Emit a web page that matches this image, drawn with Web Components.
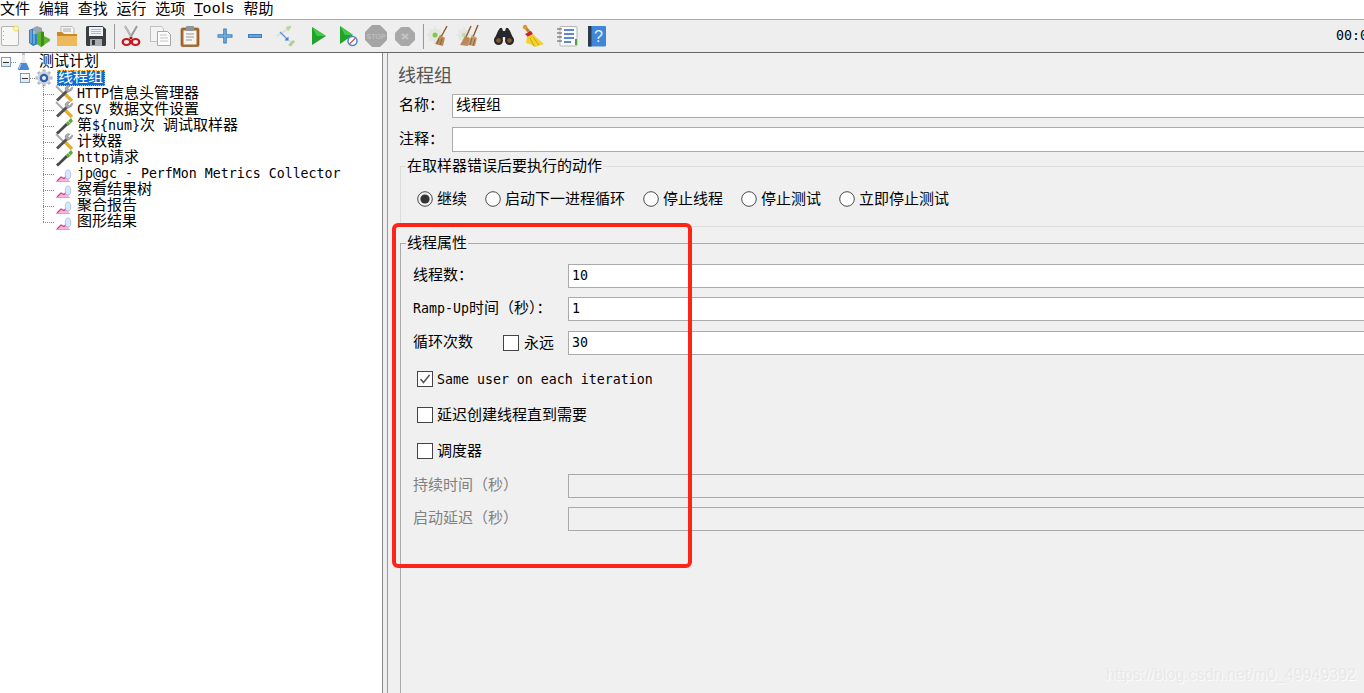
<!DOCTYPE html>
<html>
<head>
<meta charset="utf-8">
<title>JMeter</title>
<style>
    html, body { margin: 0; height: 100%; overflow: hidden; background: #f0f0f0; }
</style>
</head>
<body>
<jm-app></jm-app>
<script>
// Icons are all drawn by hand, 22x22 for the toolbar and 18x18 for the tree
const ICONS = {
    new: `<rect x="2.5" y="1.5" width="17" height="19" rx="1.5" fill="#f7f7f3" stroke="#b4b4b4"/><circle cx="17" cy="3.5" r="2.6" fill="#fdf7b0" stroke="#ecdc6a"/><path d="M4.5 6v1M4.5 10v1M4.5 14v1" stroke="#aaa"/>`,
    templates: `<path d="M1 5l5-2 4 2v14l-5 2-4-3z" fill="#2f7fc4"/><path d="M5 3l4-2 5 2v6H5z" fill="#9aa6ad"/><path d="M9 8l5-2 2 1v4l6 3v2l-9 6-4-3z" fill="#5fb52e"/><path d="M13 7h3v13l-3 2z" fill="#3c8c1c"/><path d="M3 5v13M6 6v13" stroke="#bcdcf0" stroke-width=".8"/>`,
    open: `<path d="M5 9V1.500h11l2 2V10z" fill="#f4f4f0" stroke="#aaa" stroke-width=".8"/><path d="M7 4h8M7 6h8" stroke="#999" stroke-width=".8"/><path d="M1 7h5l2 2h13v10.500a1.500 1.500 0 0 1-1.500 1.500h-17A1.500 1.500 0 0 1 1 19.500z" fill="#c98a22"/><path d="M1 11h20v8.500a1.500 1.500 0 0 1-1.500 1.500h-17A1.500 1.500 0 0 1 1 19.500z" fill="#edb95c"/>`,
    save: `<path d="M1 2.500A1.500 1.500 0 0 1 2.500 1h15L21 4v15.500a1.500 1.500 0 0 1-1.500 1.500h-17A1.500 1.500 0 0 1 1 19.500z" fill="#3a3d42"/><rect x="4" y="2" width="14" height="9" fill="#eef2f6"/><path d="M6 4.500h10M6 6.500h10M6 8.500h10" stroke="#8fb0cf" stroke-width=".8"/><rect x="5" y="14" width="12" height="7" fill="#a9adb1"/><rect x="7" y="15" width="3" height="5" fill="#33363a"/>`,
    cut: `<path d="M5 1l7.500 13M17 1L9.500 14" stroke="#9a9a9a" stroke-width="2"/><path d="M5 1l7.500 13" stroke="#ddd" stroke-width=".7"/><ellipse cx="6.500" cy="17" rx="3.800" ry="3" fill="none" stroke="#c8171c" stroke-width="2.200"/><ellipse cx="15.500" cy="17" rx="3.800" ry="3" fill="none" stroke="#c8171c" stroke-width="2.200"/><circle cx="11" cy="13" r="1.200" fill="#b01015"/>`,
    copy: `<path d="M.5 1.500h11l2 2v13H.5z" fill="#f3f3f3" stroke="#c0c0c0"/><path d="M7.500 6.500h10l3 3v11h-13z" fill="#fbfbfb" stroke="#a8a8a8"/><path d="M10 10h7M10 13h8M10 16h8" stroke="#c4c4c4"/>`,
    paste: `<rect x="2" y="3" width="18" height="18.500" rx="1.500" fill="#a9692b" stroke="#7e4c1c" stroke-width=".6"/><rect x="4.500" y="5.500" width="13" height="14" fill="#f5f5f1"/><rect x="7" y="1" width="8" height="5" rx="1" fill="#8f9498"/><path d="M7 9h8M7 12h8M7 15h6" stroke="#999"/>`,
    plus: `<path d="M11 3.500v15M3.500 11h15" stroke="#3f7fbd" stroke-width="3.600"/><path d="M11 4.500v13M4.500 11h13" stroke="#7fb1de" stroke-width="1.400"/>`,
    minus: `<path d="M4 11h14" stroke="#3f7fbd" stroke-width="4"/><path d="M5 11h12" stroke="#86b6e1" stroke-width="1.300"/>`,
    toggle: `<path d="M13 2l4-1.500 1.500 1.500-3 4-2-1z" fill="#b9d8a4"/><path d="M13 5L4 11" stroke="#e0e0dc" stroke-width="2.400"/><path d="M12 14l7 3" stroke="#d8dadc" stroke-width="1.500"/><path d="M15 20l5-5 2 1.500-4 5z" fill="#a8d290"/><path d="M7 7l7 7" stroke="#5a94d8" stroke-width="1.200"/><path d="M15.500 15.500l-4 0 4-4z" fill="#3f80d8"/>`,
    run: `<path d="M4 2l14 9-14 9z" fill="#1fa32a"/><path d="M4 2l14 9-9 0z" fill="#43c74a"/>`,
    runno: `<path d="M3 1l13 9-13 9z" fill="#1fa32a"/><path d="M3 1l13 9-8 0z" fill="#43c74a"/><circle cx="15.500" cy="16" r="4.500" fill="#fff" stroke="#4a86cf" stroke-width="1.500"/><path d="M18.500 13l-6 6" stroke="#e05050" stroke-width="1.300"/>`,
    stop: `<path d="M7 0h8l7 7v8l-7 7H7l-7-7V7z" fill="#a4a4a4"/><text x="11" y="13.500" text-anchor="middle" font-family="Liberation Sans" font-weight="700" font-size="7" fill="#bcbcbc">STOP</text>`,
    shutdown: `<path d="M7 2h8l6 6v7l-6 6H7l-6-6V8z" fill="#a8a8a8"/><path d="M8 9l6 5M14 9l-6 5" stroke="#c4c4c4" stroke-width="2.200"/>`,
    clear: `<circle cx="8" cy="10" r="6.500" fill="#e6e6e0"/><path d="M8 1v18M0 10h16M2 4l12 12M14 4L2 16" stroke="#e6e6e0" stroke-width="2.400"/><circle cx="8" cy="10" r="2.500" fill="#7ec850"/><path d="M20 1l-6 11" stroke="#8a5a2a" stroke-width="1.400"/><path d="M13 10l5 3-2 8-8-2z" fill="#b98a58"/><path d="M12 13l-2 6M15 14l-2 6" stroke="#8a6236"/>`,
    clearall: `<circle cx="7" cy="10" r="6" fill="#e6e6e0"/><path d="M7 2v16M0 10h14M2 5l10 10M12 5L2 15" stroke="#e6e6e0" stroke-width="2.200"/><circle cx="7" cy="10" r="2.300" fill="#c4dcb0"/><path d="M14 1l-5 11M21 0l-5 12" stroke="#8a5a2a" stroke-width="1.400"/><path d="M8 11l5 2-2 8-8-1z" fill="#b98a58"/><path d="M15 10l5 3-2 8-8-1z" fill="#c69a6a"/><path d="M15 13l-2 7M18 14l-2 7" stroke="#8a6236"/>`,
    find: `<path d="M5 6l2-3h2l1 3h2l1-3h2l2 3 4 9-5 3-3-3-1-3h-2l-1 3-3 3-5-3z" fill="#26282b"/><circle cx="5.500" cy="15.500" r="4.500" fill="#26282b"/><circle cx="16.500" cy="15.500" r="4.500" fill="#26282b"/><circle cx="5.500" cy="15.500" r="2.300" fill="#8a5a2a"/><circle cx="16.500" cy="15.500" r="2.300" fill="#8a5a2a"/>`,
    broom: `<path d="M3 2l5 6" stroke="#c8862a" stroke-width="3"/><circle cx="3" cy="2" r="2.200" fill="#d99a3a"/><path d="M3 9l6-3 2 3-5 3z" fill="#d2202a"/><path d="M5 12l6-3 4 4 7 6-9 3-5-3-4-1z" fill="#f2d22c"/><path d="M8 13l4 8M11 12l6 8" stroke="#c9a61a"/>`,
    list: `<rect x="4" y="1.500" width="17" height="19.500" rx="1" fill="#fafafa" stroke="#b5b5b5"/><path d="M8 5h10M8 9h10M8 13h10M8 17h7" stroke="#2a62c8" stroke-width="1.400"/><path d="M1 4h5M1 8h5M1 12h5M1 16h5" stroke="#555" stroke-width="1.200"/><rect x="19" y="14" width="2" height="6" fill="#4ea33a"/>`,
    help: `<rect x="2" y="1" width="18" height="20.500" rx="1" fill="#3f86d8"/><rect x="2" y="1" width="3.500" height="20.500" fill="#2b3a4c"/><text x="12.500" y="17" text-anchor="middle" font-family="Liberation Sans" font-size="16" fill="#e6f0fb">?</text>`,
    flask: `<path d="M6 1h3v6l4 8a1.500 1.500 0 0 1-1.300 2H3.300A1.500 1.500 0 0 1 2 15l4-8z" fill="#e6e8ec"/><path d="M4.500 10h6l2.500 5.500a1 1 0 0 1-1 1.500H3a1 1 0 0 1-1-1.500z" fill="#4a88d4"/><path d="M5 11l-2 5" stroke="#b8d4f2"/><path d="M6 1h3" stroke="#8a93a0"/>`,
    gear: `<path d="M9 0.500v17M.5 9h17M3 3l12 12M15 3L3 15" stroke="#b4b8be" stroke-width="3"/><circle cx="9" cy="9" r="6.500" fill="#d0d3d8"/><circle cx="9" cy="9" r="4.300" fill="#2f62b0"/><circle cx="9" cy="9" r="2" fill="#e8eef8"/>`,
    config: `<path d="M1 1l9 9" stroke="#a8a8a8" stroke-width="1.800"/><path d="M10 9l7 7" stroke="#e8b020" stroke-width="3.400"/><path d="M13 5L2 15.500" stroke="#505356" stroke-width="3"/><path d="M17 2l-2.500 2.500-2-1L15 1l-2.500-.5-2.500 2.500 .5 3 3 1 3-1.500 1.500-3z" fill="#a8a8a8" stroke="#888" stroke-width=".5"/>`,
    sampler: `<path d="M12 7L2 16.500" stroke="#44474a" stroke-width="3"/><path d="M8 9l-5 5" stroke="#a4a4a4" stroke-width=".8"/><path d="M11 6l5-5 2 3-5 5z" fill="#63a63f"/><path d="M13 4l3 3" stroke="#a8d88c"/>`,
    chart: `<path d="M2 16l4-4 3 1.500 4-3.500 1 6z" fill="#f7b6dd"/><path d="M2 16l4-4 3 1.500 4-3.500" fill="none" stroke="#d9338f" stroke-width="1.100"/><path d="M1 16.500h14" stroke="#e0a0c8"/><ellipse cx="13" cy="9.500" rx="2.700" ry="4.500" fill="#dbe7fb" stroke="#9db8e6" stroke-width=".8"/>`
};

// ASCII runs are in the mono font, the rest in the CJK one
const mixText = (str) => str.replace(/[\x20-\x7e]+/g, (run) => `<span class="m">${run}</span>`);

const BASE_TEXT = `
    :host { font: 15px "Noto Sans CJK SC", sans-serif; color: #000; }
    .m { font: 13.28px/1 "DejaVu Sans Mono", monospace; white-space: pre; }
`;

class JmIcon extends HTMLElement {
    connectedCallback() {
        const size = parseInt(this.getAttribute('size') || '22');
        this.attachShadow({ mode: 'open' }).innerHTML = `
            <style>:host { display: block; width: ${size}px; height: ${size}px; flex: none; } svg { display: block; overflow: visible; }</style>
            <svg width="${size}" height="${size}" viewBox="0 0 ${size} ${size}">${ICONS[this.getAttribute('name')]}</svg>`;
    }
}

class JmMenubar extends HTMLElement {
    connectedCallback() {
        this.attachShadow({ mode: 'open' }).innerHTML = `
            <style>
                :host { display: flex; gap: 8.8px; height: 19px; background: #fff; border-bottom: 1px solid #aaa;
                    font: 15px/15px "Noto Sans CJK SC", sans-serif; color: #000; }
                .m { font: 15px/15px "Liberation Sans", sans-serif; letter-spacing: 1.100px; }
                u { text-underline-offset: 2px; }
            </style>
            <span>文件</span><span>编辑</span><span>查找</span><span>运行</span><span>选项</span>
            <span class="m"><u>T</u>ools</span><span>帮助</span>`;
    }
}

class JmToolGroup extends HTMLElement {
    connectedCallback() {
        const root = this.attachShadow({ mode: 'open' });
        const icons = this.getAttribute('icons').split(' ').map((n) => `<jm-icon name="${n}"></jm-icon>`).join('');
        const tail = this.getAttribute('tail');
        root.innerHTML = `
            <style>
                :host { display: flex; align-items: center; gap: var(--gap, 7px); height: 32px; }
                i { width: 1px; height: 25px; background: #999; margin-left: auto; margin-right: ${tail}px; }
            </style>
            ${icons}${tail ? '<i></i>' : ''}`;
    }
}

class JmToolbar extends HTMLElement {
    connectedCallback() {
        this.attachShadow({ mode: 'open' }).innerHTML = `
            <style>
                ${BASE_TEXT}
                :host { display: grid; grid-template-columns: 120px 94px 94px 119px 66px 63px 1fr 28px; height: 32px;
                    background: #eee; border-bottom: 1px solid #666; overflow: hidden; }
                .first { margin-left: -1px; }
                .time { line-height: 32px; white-space: nowrap; overflow: hidden; }
            </style>
            <jm-tool-group class="first" icons="new templates open save" tail="5" style="--gap:6.7px"></jm-tool-group>
            <jm-tool-group icons="cut copy paste" tail="6" style="--gap:7.500px"></jm-tool-group>
            <jm-tool-group icons="plus minus toggle" tail="7" style="--gap:7.500px"></jm-tool-group>
            <jm-tool-group icons="run runno stop shutdown" tail="4" style="--gap:6.700px"></jm-tool-group>
            <jm-tool-group icons="clear clearall" tail="6" style="--gap:8px"></jm-tool-group>
            <jm-tool-group icons="find broom" tail="5" style="--gap:7px"></jm-tool-group>
            <jm-tool-group icons="list help" style="--gap:8px"></jm-tool-group>
            <span class="time m">00:00:00</span>`;
    }
}

class JmTreeNode extends HTMLElement {
    connectedCallback() {
        const level = parseInt(this.getAttribute('level') || '0');
        const selected = this.hasAttribute('selected');
        // level 0 and 1 have an expander box, level 2 only a dotted branch
        const lead = level === 2
            ? '<span class="indent2"></span><span class="branch"></span>'
            : `<span style="width:${level * 19}px"></span><span class="box"></span><span class="stub"></span>`;
        this.attachShadow({ mode: 'open' }).innerHTML = `
            <style>
                ${BASE_TEXT}
                :host { display: flex; align-items: center; height: 16px; line-height: 16px; white-space: nowrap; }
                .box { box-sizing: border-box; width: 10px; height: 10px; margin: 2px 0 0 1px; border: 1px solid #7f9db9; background: linear-gradient(#fff, #dfe6ee); display: flex; align-items: center; justify-content: center; flex: none; }
                .box::after { content: ''; width: 6px; height: 1px; background: #333; }
                .stub { width: 5px; height: 1px; margin-top: 2px; background-image: linear-gradient(90deg, #888 50%, transparent 50%); background-size: 2px 1px; }
                .indent2 { width: 43px; }
                .branch { width: 12px; height: 1px; margin-top: 2px; background-image: linear-gradient(90deg, #888 50%, transparent 50%); background-size: 2px 1px; }
                jm-icon { margin-top: 2px; }
                .label { margin-left: ${level === 0 ? 5 : 4}px; margin-bottom: 2px; }
                .sel { background: #0a6ccd; color: #fff; outline: 1px dotted #f2b04a; outline-offset: -1px; height: 16px; line-height: 12px; margin: 2px 0 0 4px; padding: 0 2px 0 1px; }
            </style>
            ${lead}
            <jm-icon name="${this.getAttribute('icon')}" size="18"></jm-icon>
            <span class="${selected ? 'sel' : 'label'}">${mixText(this.getAttribute('label'))}</span>`;
    }
}

class JmTree extends HTMLElement {
    connectedCallback() {
        this.attachShadow({ mode: 'open' }).innerHTML = `
            <style>
                :host { display: block; position: relative; width: 382px; flex: none; background: #fff; border-right: 1px solid #888; }
                .trunk { position: absolute; left: 43px; top: 32px; width: 1px; height: 138px;
                    background-image: linear-gradient(#888 50%, transparent 50%); background-size: 1px 2px; }
            </style>
            <div class="trunk"></div>
            <slot></slot>`;
    }
}

class JmField extends HTMLElement {
    connectedCallback() {
        const value = this.getAttribute('value') || '';
        const h = parseInt(this.getAttribute('h') || '24');
        const off = this.hasAttribute('disabled');
        this.attachShadow({ mode: 'open' }).innerHTML = `
            <style>
                ${BASE_TEXT}
                :host { display: block; flex: 1; min-width: 0; box-sizing: border-box; height: ${h}px; line-height: ${h - 6}px;
                    background: ${off ? 'transparent' : '#fff'}; border: 1px solid #aaa; border-right: 0; padding-left: 3px; white-space: nowrap; }
            </style>${mixText(value)}`;
    }
}

class JmRow extends HTMLElement {
    connectedCallback() {
        const label = this.getAttribute('label');
        const off = this.hasAttribute('disabled');
        const w = this.getAttribute('label-width');
        this.attachShadow({ mode: 'open' }).innerHTML = `
            <style>
                ${BASE_TEXT}
                :host { display: flex; align-items: center; white-space: nowrap; color: ${off ? '#808080' : '#000'}; }
                .l { width: ${w}px; flex: none; display: flex; align-items: center; }
                .t { flex: 1; line-height: 18px; margin-bottom: 4px; }
            </style>
            <span class="l"><span class="t">${mixText(label)}</span><slot name="extra"></slot></span>
            <slot></slot>`;
    }
}

class JmRadio extends HTMLElement {
    connectedCallback() {
        const on = this.hasAttribute('checked');
        this.attachShadow({ mode: 'open' }).innerHTML = `
            <style>
                ${BASE_TEXT}
                :host { display: flex; align-items: center; gap: 4px; height: 20px; white-space: nowrap; }
                svg { display: block; flex: none; }
                span { margin-bottom: 4px; }
            </style>
            <svg width="16" height="16" viewBox="0 0 16 16"><circle cx="8" cy="8" r="7.300" fill="${on ? '#f0f0f0' : '#fff'}" stroke="#4a4a4a"/>${on ? '<circle cx="8" cy="8" r="4.600" fill="#333"/>' : ''}</svg>
            <span><slot></slot></span>`;
    }
}

class JmCheck extends HTMLElement {
    connectedCallback() {
        const on = this.hasAttribute('checked');
        const label = this.getAttribute('label');
        this.attachShadow({ mode: 'open' }).innerHTML = `
            <style>
                ${BASE_TEXT}
                :host { display: flex; align-items: center; gap: ${this.getAttribute('gap') || 4}px; height: 20px; white-space: nowrap; }
                svg { display: block; flex: none; }
                span { margin-bottom: 4px; }
            </style>
            <svg width="16" height="16" viewBox="0 0 16 16"><rect x=".5" y=".5" width="15" height="15" fill="#fff" stroke="#444"/>${on ? '<path d="M3.500 8l3 3.500 6-7.500" fill="none" stroke="#555" stroke-width="1.500"/>' : ''}</svg>
            <span>${mixText(label)}</span>`;
    }
}

class JmTitledBox extends HTMLElement {
    connectedCallback() {
        const color = this.getAttribute('line');
        this.attachShadow({ mode: 'open' }).innerHTML = `
            <style>
                ${BASE_TEXT}
                :host { display: block; }
                fieldset { margin: 0; height: 100%; box-sizing: border-box; border: 1px solid ${color}; border-right: 0; padding: 0; min-width: 0; }
                legend { margin-left: 5px; padding: 0 1px 2px; line-height: 18px; }
            </style>
            <fieldset><legend>${this.getAttribute('title')}</legend><slot></slot></fieldset>`;
    }
}

class JmThreadGroup extends HTMLElement {
    connectedCallback() {
        this.attachShadow({ mode: 'open' }).innerHTML = `
            <style>
                ${BASE_TEXT}
                :host { display: flex; flex-direction: column; position: relative; flex: 1; min-width: 0; overflow: hidden;
                    background: #f0f0f0; border-left: 1px solid #999; padding-left: 11px; }
                h1 { margin: 10px 0 7px -1px; font: 18px/22px "Noto Sans CJK SC", sans-serif; color: #555; height: 24px; }
                .box1 { margin: 4px 0 0 1px; }
                .box2 { margin: 6px 0 -4px 1px; flex: 1; }
                .radios { display: flex; gap: 18px; padding: 13px 0 17px 16px; }
                .props { display: flex; flex-direction: column; padding: 11px 0 0 12px; }
                .mt33 { margin-top: 9px; } .mt34 { margin-top: 10px; }
                .c1 { margin: 14px 0 0 4px; } .c2 { margin: 16px 0 0 4px; }
                .d1 { margin-top: 13px; }
                .mark { position: absolute; left: 4px; top: 170px; box-sizing: border-box; width: 300px; height: 345px;
                    border: 4.500px solid #ff2418; border-radius: 6px; pointer-events: none; }
                .wm { position: absolute; right: 8px; bottom: 8px; font: 16px/20px "Liberation Sans", sans-serif;
                    color: #e8e8e8; text-shadow: 1px 1px 0 #fbfbfb; white-space: nowrap; }
            </style>
            <h1>线程组</h1>
            <jm-row label="名称：" label-width="53"><jm-field value="线程组"></jm-field></jm-row>
            <jm-row class="mt33" label="注释：" label-width="53"><jm-field h="25"></jm-field></jm-row>
            <jm-titled-box class="box1" title="在取样器错误后要执行的动作" line="#ddd">
                <div class="radios">
                    <jm-radio checked>继续</jm-radio>
                    <jm-radio>启动下一进程循环</jm-radio>
                    <jm-radio>停止线程</jm-radio>
                    <jm-radio>停止测试</jm-radio>
                    <jm-radio>立即停止测试</jm-radio>
                </div>
            </jm-titled-box>
            <jm-titled-box class="box2" title="线程属性" line="#aaa">
                <div class="props">
                    <jm-row label="线程数：" label-width="155"><jm-field value="10"></jm-field></jm-row>
                    <jm-row class="mt33" label="Ramp-Up时间（秒）：" label-width="155"><jm-field value="1"></jm-field></jm-row>
                    <jm-row class="mt34" label="循环次数" label-width="155">
                        <jm-check slot="extra" label="永远" gap="5" style="margin-right:14px"></jm-check>
                        <jm-field value="30"></jm-field>
                    </jm-row>
                    <jm-check class="c1" checked label="Same user on each iteration"></jm-check>
                    <jm-check class="c2" label="延迟创建线程直到需要"></jm-check>
                    <jm-check class="c2" label="调度器"></jm-check>
                    <jm-row class="d1" disabled label="持续时间（秒）" label-width="155"><jm-field disabled></jm-field></jm-row>
                    <jm-row class="mt33" disabled label="启动延迟（秒）" label-width="155"><jm-field disabled></jm-field></jm-row>
                </div>
            </jm-titled-box>
            <div class="mark"></div>
            <div class="wm">https://blog.csdn.net/m0_49949392</div>`;
    }
}

class JmApp extends HTMLElement {
    connectedCallback() {
        this.attachShadow({ mode: 'open' }).innerHTML = `
            <style>
                :host { display: flex; flex-direction: column; height: 693px; width: 1364px; overflow: hidden; }
                main { display: flex; flex: 1; min-height: 0; }
                .split { width: 4px; flex: none; background: #eee; }
            </style>
            <jm-menubar></jm-menubar>
            <jm-toolbar></jm-toolbar>
            <main>
                <jm-tree>
                    <jm-tree-node level="0" icon="flask" label="测试计划"></jm-tree-node>
                    <jm-tree-node level="1" icon="gear" label="线程组" selected></jm-tree-node>
                    <jm-tree-node level="2" icon="config" label="HTTP信息头管理器"></jm-tree-node>
                    <jm-tree-node level="2" icon="config" label="CSV 数据文件设置"></jm-tree-node>
                    <jm-tree-node level="2" icon="sampler" label="第\${num}次 调试取样器"></jm-tree-node>
                    <jm-tree-node level="2" icon="config" label="计数器"></jm-tree-node>
                    <jm-tree-node level="2" icon="sampler" label="http请求"></jm-tree-node>
                    <jm-tree-node level="2" icon="chart" label="jp@gc - PerfMon Metrics Collector"></jm-tree-node>
                    <jm-tree-node level="2" icon="chart" label="察看结果树"></jm-tree-node>
                    <jm-tree-node level="2" icon="chart" label="聚合报告"></jm-tree-node>
                    <jm-tree-node level="2" icon="chart" label="图形结果"></jm-tree-node>
                </jm-tree>
                <div class="split"></div>
                <jm-thread-group></jm-thread-group>
            </main>`;
    }
}

customElements.define('jm-icon', JmIcon);
customElements.define('jm-menubar', JmMenubar);
customElements.define('jm-tool-group', JmToolGroup);
customElements.define('jm-toolbar', JmToolbar);
customElements.define('jm-tree-node', JmTreeNode);
customElements.define('jm-tree', JmTree);
customElements.define('jm-field', JmField);
customElements.define('jm-row', JmRow);
customElements.define('jm-radio', JmRadio);
customElements.define('jm-check', JmCheck);
customElements.define('jm-titled-box', JmTitledBox);
customElements.define('jm-thread-group', JmThreadGroup);
customElements.define('jm-app', JmApp);
</script>
</body>
</html>
